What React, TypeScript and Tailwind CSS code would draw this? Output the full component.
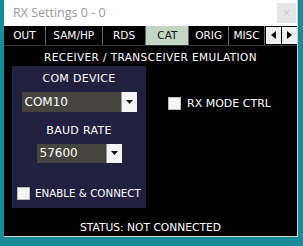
import React from 'react';

const tabs = [
  { label: 'OUT', w: 'w-[42px]' },
  { label: 'SAM/HP', w: 'w-[57px]' },
  { label: 'RDS', w: 'w-[44px]' },
  { label: 'CAT', w: 'w-[43px]', active: true },
  { label: 'ORIG', w: 'w-[40px]' },
  { label: 'MISC', w: 'w-[36px]' },
];

const DropButton: React.FC = () => (
  <div className="w-[16px] h-full bg-[#f4f4f4] border-l border-[#999] flex items-center justify-center">
    <svg width="7" height="4" viewBox="0 0 7 4">
      <path d="M0 0 L7 0 L3.5 4 Z" fill="#111" />
    </svg>
  </div>
);

const Checkbox: React.FC = () => (
  <div className="w-[13px] h-[13px] bg-[#f5f5f5] border border-[#bbb]" />
);

export default function App() {
  return (
    <div
      className="w-[303px] h-[246px] bg-[#1b8a99] overflow-hidden"
      style={{ fontFamily: '"DejaVu Sans", Verdana, sans-serif' }}
    >
      <div className="ml-[4px] w-[294px] h-[237px] flex flex-col border-r border-b border-[#c8d0d0] bg-black">
        {/* Title bar */}
        <div className="h-[26px] bg-white flex items-center justify-between">
          <span
            className="pl-[9px] text-[12.5px] text-[#9a9a9a]"
            style={{ fontFamily: '"Open Sans", "Noto Sans", sans-serif' }}
          >
            RX Settings 0 - 0
          </span>
          <div className="w-[19px] h-[20px] mr-[1px] bg-[#e6e6e6] flex items-center justify-center text-[10px] text-[#ccc]">
            ×
          </div>
        </div>

        {/* Tabs */}
        <div className="h-[20px] flex bg-black border-b border-[#333]">
          {tabs.map((t) => (
            <div
              key={t.label}
              className={`${t.w} flex items-center justify-center text-[10.5px] border-r border-[#666] ${
                t.active ? 'bg-[#c3d5c3] text-[#111]' : 'text-white'
              }`}
            >
              {t.label}
            </div>
          ))}
          <div className="flex items-center gap-[1px] pl-[1px]">
            <div className="w-[15px] h-[17px] bg-[#f0f0f0] flex items-center justify-center">
              <svg width="5" height="8" viewBox="0 0 5 8">
                <path d="M5 0 L0 4 L5 8 Z" fill="#111" />
              </svg>
            </div>
            <div className="w-[15px] h-[17px] bg-[#f0f0f0] flex items-center justify-center">
              <svg width="5" height="8" viewBox="0 0 5 8">
                <path d="M0 0 L5 4 L0 8 Z" fill="#111" />
              </svg>
            </div>
          </div>
        </div>

        {/* Content */}
        <div className="flex-1 flex flex-col text-white">
          <div className="text-center text-[10.5px] tracking-[0.4px] mt-[4px] h-[14px] leading-[14px]">
            RECEIVER / TRANSCEIVER EMULATION
          </div>

          <div className="flex mt-[2px]">
            <div className="ml-[8px] w-[134px] h-[142px] bg-[#22203f] flex flex-col items-center">
              <div className="text-[11px] tracking-[0.3px] mt-[6px] leading-[13px]">COM DEVICE</div>
              <div className="mt-[7px] w-[115px] h-[20px] bg-[#46443e] flex items-center">
                <span className="flex-1 pl-[3px] text-[12px]">COM10</span>
                <DropButton />
              </div>
              <div className="text-[11px] tracking-[0.3px] mt-[12px] leading-[13px]">BAUD RATE</div>
              <div className="mt-[7px] w-[85px] h-[19px] bg-[#46443e] flex items-center">
                <span className="flex-1 pl-[3px] text-[12px]">57600</span>
                <DropButton />
              </div>
              <div className="self-start ml-[5px] mt-[23px] flex items-center gap-[5px]">
                <Checkbox />
                <span className="text-[10.3px]">ENABLE &amp; CONNECT</span>
              </div>
            </div>

            <div className="ml-[22px] mt-[30px] flex items-start gap-[6px]">
              <div className="mt-[1px]">
                <Checkbox />
              </div>
              <span className="text-[11px]">RX MODE CTRL</span>
            </div>
          </div>

          <div className="text-center text-[10.7px] mt-[12px]">STATUS: NOT CONNECTED</div>
        </div>
      </div>
    </div>
  );
}
